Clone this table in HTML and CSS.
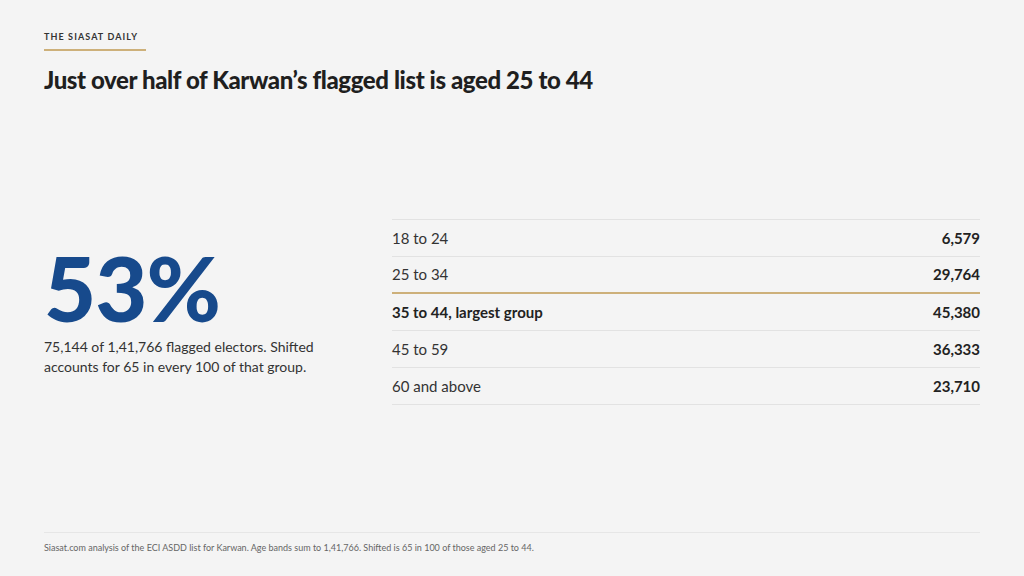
FILE: index.html
```html
<!DOCTYPE html>
<html lang="en">
<head>
<meta charset="utf-8">
<title>Karwan flagged list by age</title>
<link rel="stylesheet" href="styles.css">
</head>
<body>
<div class="page">
  <header class="head">
    <div class="eyebrow">THE SIASAT DAILY</div>
    <h1 class="title">Just over half of Karwan’s flagged list is aged 25 to 44</h1>
  </header>
  <main class="main">
    <section class="stat">
      <div class="big">53%</div>
      <p class="note">75,144 of 1,41,766 flagged electors. Shifted accounts for 65 in every 100 of that group.</p>
    </section>
    <section class="table">
      <div class="row"><span class="label">18 to 24</span><span class="val">6,579</span></div>
      <div class="row pre-hl"><span class="label">25 to 34</span><span class="val">29,764</span></div>
      <div class="row hl"><span class="label">35 to 44, largest group</span><span class="val">45,380</span></div>
      <div class="row"><span class="label">45 to 59</span><span class="val">36,333</span></div>
      <div class="row"><span class="label">60 and above</span><span class="val">23,710</span></div>
    </section>
  </main>
  <footer class="foot">Siasat.com analysis of the ECI ASDD list for Karwan. Age bands sum to 1,41,766. Shifted is 65 in 100 of those aged 25 to 44.</footer>
</div>
</body>
</html>
```

FILE: styles.css
```css
* { box-sizing: border-box; }
html, body { margin: 0; padding: 0; }
body {
  background: #f4f4f4;
  font-family: Lato, "Open Sans", "Liberation Sans", sans-serif;
  color: #2a2a2a;
}
.page {
  width: 1024px;
  height: 576px;
  padding: 31px 44px 0;
  display: flex;
  flex-direction: column;
}
.eyebrow {
  width: 102px;
  font-size: 9px;
  font-weight: 700;
  letter-spacing: 1.1px;
  color: #333;
  line-height: 12px;
  padding-bottom: 6px;
  border-bottom: 2px solid #cdb07a;
}
.title {
  margin: 14px 0 0;
  font-size: 24px;
  font-weight: 900;
  line-height: 30px;
  color: #1f1f1f;
  letter-spacing: -0.4px;
}
.main {
  flex: 1;
  display: grid;
  grid-template-columns: 296px 1fr;
  column-gap: 52px;
  align-items: center;
  padding-bottom: 4px;
}
.stat {
  padding-bottom: 4px;
}
.big {
  font-size: 90px;
  font-weight: 900;
  line-height: 88px;
  color: #174a8c;
  letter-spacing: -1px;
}
.note {
  margin: 6px 0 0;
  font-size: 14px;
  line-height: 20px;
  color: #333;
}
.table {
  border-top: 1px solid #e2e2e2;
}
.row {
  display: flex;
  justify-content: space-between;
  align-items: center;
  height: 37px;
  border-bottom: 1px solid #e2e2e2;
  font-size: 15px;
  color: #333;
}
.row.pre-hl { border-bottom: 2px solid #cdb07a; }
.row.hl .label { font-weight: 700; color: #222; }
.val { font-weight: 700; color: #222; }
.foot {
  border-top: 1px solid #e6e6e6;
  height: 44px;
  padding-top: 9px;
  font-size: 9px;
  line-height: 12px;
  color: #666;
}
```
